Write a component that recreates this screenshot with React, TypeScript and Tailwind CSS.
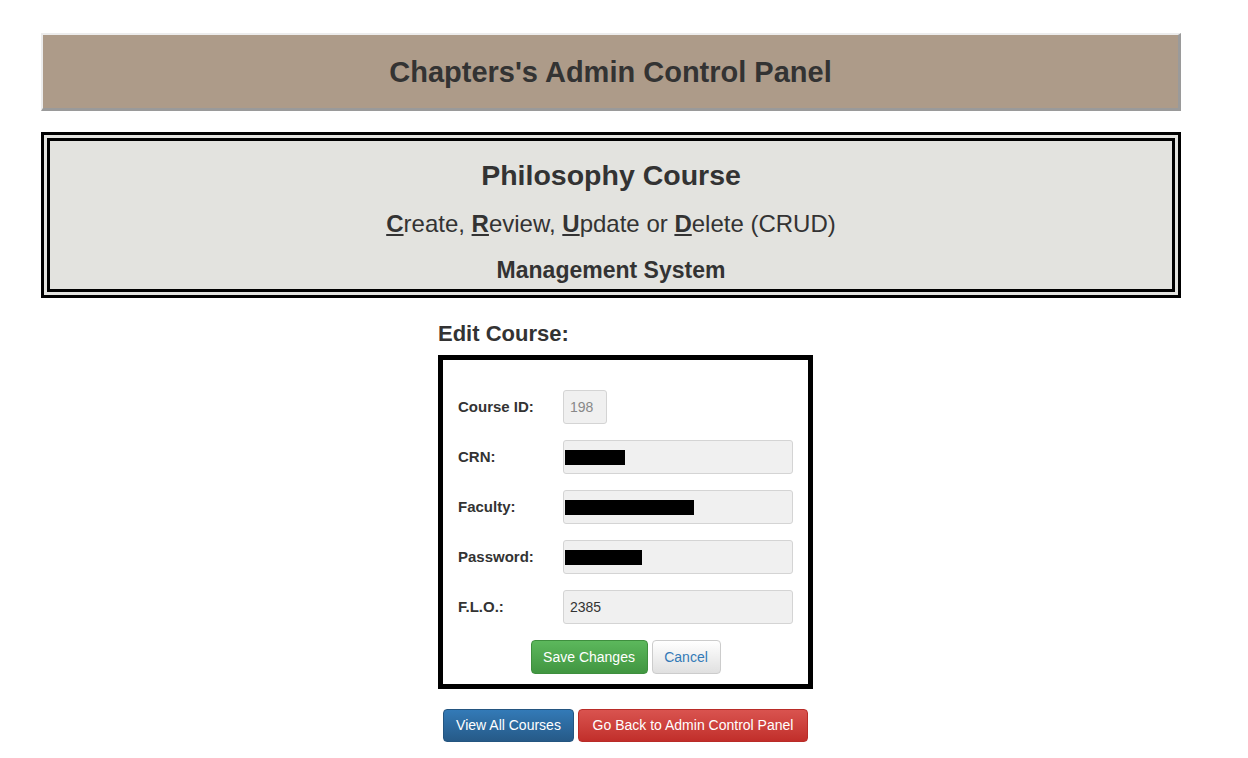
import React from "react";

const inputBox =
  "h-[34px] w-[230px] rounded-[3px] border border-[#d4d4d4] bg-[#f0f0f0] px-[6px] flex items-center text-[14px] text-[#333]";

const Redacted = ({ w }: { w: string }) => <span className={`block -ml-[5px] h-[15px] bg-black ${w}`} />;

export default function App() {
  return (
    <div className="min-h-screen w-full bg-white text-[#333]" style={{ fontFamily: '"Liberation Sans", Arial, sans-serif' }}>
      <div className="pt-[33px] pl-[41px]">
        {/* Header bar */}
        <div className="w-[1140px] h-[78px] flex items-center justify-center bg-[#ad9b89] border-t-2 border-l-2 border-t-[#ececec] border-l-[#ececec] border-b-[3px] border-r-[3px] border-b-[#9a9a9a] border-r-[#9a9a9a]">
          <h2 className="text-[29px] font-bold leading-none mt-[2px]">Chapters's Admin Control Panel</h2>
        </div>

        {/* CRUD box */}
        <div className="mt-[21px] w-[1140px] h-[166px] border-[9px] border-double border-black bg-[#e3e3df] flex flex-col items-center">
          <h2 className="mt-[20px] text-[28.5px] font-bold leading-none">Philosophy Course</h2>
          <p className="mt-[22px] text-[24px] leading-none">
            <u className="font-bold">C</u>reate, <u className="font-bold">R</u>eview, <u className="font-bold">U</u>pdate or{" "}
            <u className="font-bold">D</u>elete (CRUD)
          </p>
          <p className="mt-[23px] text-[23px] font-bold leading-none">Management System</p>
        </div>

        {/* Edit form */}
        <div className="ml-[397px] w-[375px] mt-[25px]">
          <h3 className="text-[22px] font-bold leading-none mb-[10px]">Edit Course:</h3>
          <div className="border-[5px] border-black bg-white px-[15px] pt-[30px] pb-[10px]">
            <div className="flex flex-col gap-[16px]">
              <div className="flex items-center">
                <label className="w-[105px] text-[15px] font-bold">Course ID:</label>
                <div className="h-[34px] w-[44px] rounded-[3px] border border-[#d4d4d4] bg-[#f0f0f0] px-[6px] flex items-center text-[14px] text-[#888]">198</div>
              </div>
              <div className="flex items-center">
                <label className="w-[105px] text-[15px] font-bold">CRN:</label>
                <div className={inputBox}><Redacted w="w-[60px]" /></div>
              </div>
              <div className="flex items-center">
                <label className="w-[105px] text-[15px] font-bold">Faculty:</label>
                <div className={inputBox}><Redacted w="w-[129px]" /></div>
              </div>
              <div className="flex items-center">
                <label className="w-[105px] text-[15px] font-bold">Password:</label>
                <div className={inputBox}><Redacted w="w-[77px]" /></div>
              </div>
              <div className="flex items-center">
                <label className="w-[105px] text-[15px] font-bold">F.L.O.:</label>
                <div className={inputBox}>2385</div>
              </div>
            </div>
            <div className="mt-[16px] flex justify-center gap-[4px]">
              <button className="h-[34px] w-[117px] rounded-[4px] border border-[#3e8f3e] bg-gradient-to-b from-[#5cb85c] to-[#419641] text-[14px] text-white">
                Save Changes
              </button>
              <button className="h-[34px] w-[69px] rounded-[4px] border border-[#ccc] bg-gradient-to-b from-white to-[#e0e0e0] text-[14px] text-[#337ab7]">
                Cancel
              </button>
            </div>
          </div>
          <div className="mt-[20px] flex justify-center gap-[4px]">
            <button className="h-[33px] w-[131px] rounded-[4px] border border-[#245580] bg-gradient-to-b from-[#337ab7] to-[#265a88] text-[14px] text-white">
              View All Courses
            </button>
            <button className="h-[33px] w-[230px] rounded-[4px] border border-[#b92c28] bg-gradient-to-b from-[#d9534f] to-[#c12e2a] text-[14px] text-white">
              Go Back to Admin Control Panel
            </button>
          </div>
        </div>
      </div>
    </div>
  );
}
